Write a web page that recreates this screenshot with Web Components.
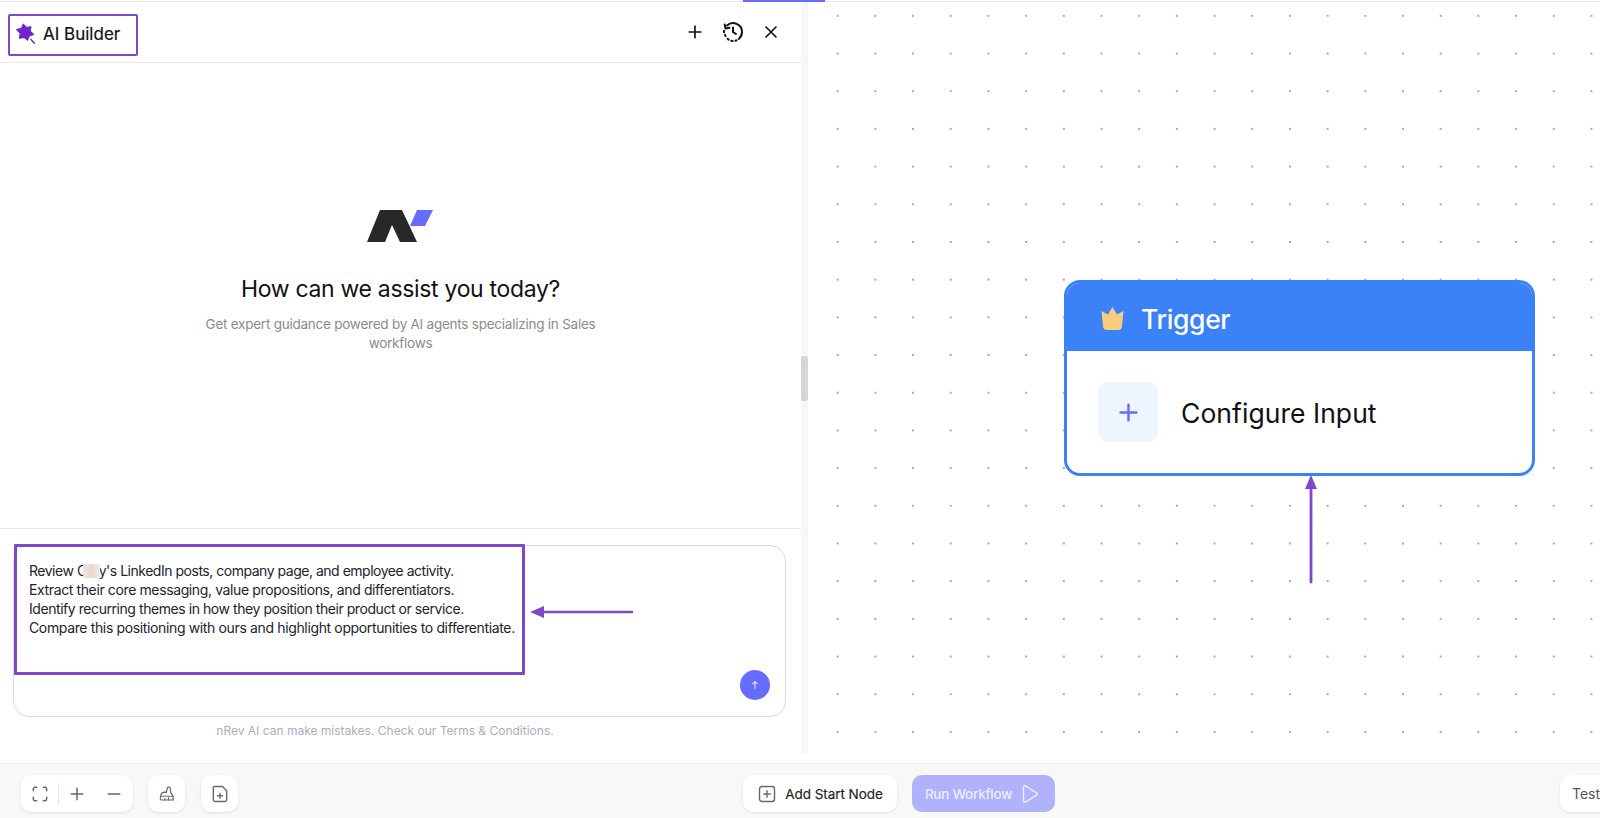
<!DOCTYPE html>
<html lang="en">
<head>
<meta charset="utf-8">
<title>AI Builder</title>
<style>
  html, body { margin: 0; height: 100%; overflow: hidden; background: #fff; }
  body { font-family: Inter, "Liberation Sans", sans-serif; }
</style>
</head>
<body>
<app-shell></app-shell>
<script>
const ICONS = {
  plus: `<path d="M12 5v14M5 12h14"/>`,
  close: `<path d="M6 6l12 12M18 6L6 18"/>`,
  history: `<path d="M6 5.400A9 9 0 0 1 21 12a9 9 0 0 1-3.200 6.900"/><path d="M15.500 20.300l-1 .4M11.600 21l-1.300-.2M7.600 19.600l-1-.8M4.600 16.200l-.6-1.300M3 12.200v-1.400"/><path d="M3.600 4.400l.9 4 4-.6"/><path d="M12 7.500V12l3 2"/>`,
  fit: `<path d="M4 8V6a2 2 0 0 1 2-2h2M16 4h2a2 2 0 0 1 2 2v2M20 16v2a2 2 0 0 1-2 2h-2M8 20H6a2 2 0 0 1-2-2v-2"/>`,
  minus: `<path d="M5 12h14"/>`,
  broom: `<path d="M4 13c.5-2 2.500-3.500 5-3.500l2 .5 1.500-6c.4-1.500 3.500-1.500 3.800 0l.7 6.500c2 1 3 3 3.500 9.500H5c-1.300 0-2-1-2-2z"/><path d="M3.500 15h17M9 20v-2M14 20v-3"/>`,
  doc: `<path d="M5 3h10l5 5v11a2 2 0 0 1-2 2H6a2 2 0 0 1-2-2V4a1 1 0 0 1 1-1z"/><path d="M12 11v6M9 14h6"/>`,
  addbox: `<rect x="3" y="3" width="18" height="18" rx="3"/><path d="M12 8v8M8 12h8"/>`,
  play: `<path d="M6 4.500c0-1.200 1.200-1.900 2.200-1.300l12 7.500c1 .6 1 2 0 2.600l-12 7.500c-1 .6-2.200-.1-2.200-1.300z"/>`
};

class UiIcon extends HTMLElement {
  connectedCallback() {
    const size = this.getAttribute("size") || 20;
    const sw = this.getAttribute("stroke") || 2;
    this.attachShadow({ mode: "open" }).innerHTML = `
      <style>:host { display: inline-flex; line-height: 0; } svg { display: block; }</style>
      <svg width="${size}" height="${size}" viewBox="0 0 24 24" fill="none" stroke="currentColor" stroke-width="${sw}" stroke-linecap="round" stroke-linejoin="round">${ICONS[this.getAttribute("name")]}</svg>`;
  }
}
customElements.define("ui-icon", UiIcon);

class AiHeader extends HTMLElement {
  constructor() {
    super();
    this.attachShadow({ mode: "open" }).innerHTML = `
      <style>
        :host { display: flex; align-items: center; justify-content: space-between; height: 61px; box-sizing: border-box; border-bottom: 1px solid #e8e8e8; padding: 0 20px 0 8px; flex: none; }
        .title { display: flex; align-items: center; gap: 6px; width: 130px; height: 42px; box-sizing: border-box; border: 2.5px solid #7e48c8; border-radius: 2px; padding: 0 0 2px 5px; font-size: 17px; font-weight: 400; color: #111; margin-top: 5px; -webkit-text-stroke: .2px #111; }
        .actions { display: flex; align-items: center; gap: 16px; color: #111; margin-top: 0; }
      </style>
      <div class="title">
        <svg width="22" height="22" viewBox="0 0 20 20"><path d="M7.500 1l2.700 3 4.300-.6-.6 4.200 3 2.800-3.900 1.500-1.700 3.700-3-2.500-4.300.7.800-4.300L1.500 6l4.300-1.100z" fill="#6d28c9" stroke="#6d28c9" stroke-linejoin="round"/><path d="M14.500 15l3.200 3.400" stroke="#6d28c9" stroke-width="1.400" stroke-linecap="round"/></svg>
        <span>AI Builder</span>
      </div>
      <div class="actions">
        <ui-icon name="plus" size="20"></ui-icon>
        <ui-icon name="history" size="24"></ui-icon>
        <ui-icon name="close" size="20"></ui-icon>
      </div>`;
  }
}
customElements.define("ai-header", AiHeader);

class AiWelcome extends HTMLElement {
  constructor() {
    super();
    this.attachShadow({ mode: "open" }).innerHTML = `
      <style>
        :host { display: flex; flex-direction: column; align-items: center; flex: 1; padding-top: 147px; box-sizing: border-box; }
        svg { display: block; margin-left: -2px; }
        h2 { margin: 31px 0 0; font-size: 23px; line-height: 32px; font-weight: 400; color: #111; letter-spacing: -.32px; }
        p { margin: 10px 0 0; width: 410px; text-align: center; font-size: 13.5px; line-height: 19px; color: #8b8b8b; letter-spacing: -.24px; }
      </style>
      <svg width="66" height="32" viewBox="0 0 66 32">
        <path d="M13 0h22l15 32H33l-8-17-7 17H0z" fill="#282828"/>
        <path d="M50 0h16l-8 16H43z" fill="#666cff"/>
      </svg>
      <h2>How can we assist you today?</h2>
      <p>Get expert guidance powered by AI agents specializing in Sales workflows</p>`;
  }
}
customElements.define("ai-welcome", AiWelcome);

class AiComposer extends HTMLElement {
  constructor() {
    super();
    this.attachShadow({ mode: "open" }).innerHTML = `
      <style>
        :host { display: block; flex: none; border-top: 1px solid #e8e8ec; padding: 16px 15px 0 13px; position: relative; }
        .box { height: 172px; box-sizing: border-box; border: 1px solid #d5dae5; border-radius: 16px; padding: 15px 15px; position: relative; color: #20242c; font-size: 14px; line-height: 19px; letter-spacing: -.38px; white-space: nowrap; }
        .box div:first-child { letter-spacing: -.48px; }
        .box div:nth-child(3) { letter-spacing: -.44px; }
        .box div:nth-child(4) { letter-spacing: -.36px; }
        .blur { display: inline-block; width: 17px; height: 14px; margin: 0 -1px 0 -4px; vertical-align: -2px; background: linear-gradient(90deg, #f0e6e0, #e7d8d0 50%, #f3ece8); position: relative; }
        .send { position: absolute; right: 15px; bottom: 16px; width: 30px; height: 30px; border-radius: 50%; background: #666cff; display: flex; align-items: center; justify-content: center; color: #d5d7ff; }
        .mark { position: absolute; left: 14px; top: 15px; width: 511px; height: 131px; box-sizing: border-box; border: 3px solid #7e48c8; border-radius: 1px; pointer-events: none; }
        .arrow { position: absolute; left: 528px; top: 75px; }
        .note { text-align: center; margin: 6px 0 0 -13px; width: 770px; font-size: 12px; line-height: 16px; color: #a9aebd; letter-spacing: 0; }
      </style>
      <div class="box">
        <div>Review C<span class="blur"></span>y's LinkedIn posts, company page, and employee activity.</div>
        <div>Extract their core messaging, value propositions, and differentiators.</div>
        <div>Identify recurring themes in how they position their product or service.</div>
        <div>Compare this positioning with ours and highlight opportunities to differentiate.</div>
        <span class="send"><svg width="10" height="10" viewBox="0 0 10 10" fill="none" stroke="currentColor" stroke-width="1.200"><path d="M5 9V1.500M2.500 4L5 1.500 7.500 4"/></svg></span>
      </div>
      <div class="mark"></div>
      <svg class="arrow" width="106" height="16" viewBox="0 0 106 16"><path d="M104 8H12" stroke="#7e48c8" stroke-width="2.500" stroke-linecap="round"/><path d="M2 8l14-6v12z" fill="#7e48c8"/></svg>
      <div class="note">nRev AI can make mistakes. Check our Terms &amp; Conditions.</div>`;
  }
}
customElements.define("ai-composer", AiComposer);

class AiPanel extends HTMLElement {
  constructor() {
    super();
    this.attachShadow({ mode: "open" }).innerHTML = `
      <style>
        :host { display: flex; flex-direction: column; width: 801px; flex: none; height: 100%; background: #fff; padding-bottom: 24px; box-sizing: border-box; }
      </style>
      <ai-header></ai-header>
      <ai-welcome></ai-welcome>
      <ai-composer></ai-composer>`;
  }
}
customElements.define("ai-panel", AiPanel);

class PanelDivider extends HTMLElement {
  constructor() {
    super();
    this.attachShadow({ mode: "open" }).innerHTML = `
      <style>
        :host { display: block; width: 7px; flex: none; background: #f5f7fd; position: relative; margin-bottom: 9px; }
        .thumb { position: absolute; left: 0; right: 0; top: 354px; height: 45px; background: #d5d6d8; border-radius: 2px; }
      </style>
      <div class="thumb"></div>`;
  }
}
customElements.define("panel-divider", PanelDivider);

class TriggerNode extends HTMLElement {
  constructor() {
    super();
    this.attachShadow({ mode: "open" }).innerHTML = `
      <style>
        :host { display: block; position: absolute; left: 256px; top: 278px; width: 471px; box-sizing: border-box; border: 3px solid #3b82f6; border-radius: 16px; background: #fff; overflow: hidden; }
        .head { height: 68px; box-sizing: border-box; background: #3b82f6; display: flex; align-items: center; gap: 17px; padding: 4px 0 0 34px; color: #fff; font-size: 26.5px; font-weight: 500; letter-spacing: -.35px; }
        .head svg { margin-top: -2px; }
        .body { height: 122px; display: flex; align-items: center; gap: 23px; padding-left: 31px; font-size: 26.5px; color: #111; letter-spacing: .05px; }
        .body span { margin-top: 2px; }
        .add { width: 60px; height: 60px; border-radius: 10px; background: #eff5ff; display: flex; align-items: center; justify-content: center; color: #666cff; }
      </style>
      <div class="head">
        <svg width="23" height="23" viewBox="0 0 23 23"><path d="M11.500 0l4.500 7.500 6.500-3.500-1.500 15a4 4 0 0 1-4 4H6a4 4 0 0 1-4-4L.5 4 7 7.500z" fill="#fbcb7e"/></svg>
        <span>Trigger</span>
      </div>
      <div class="body">
        <div class="add"><ui-icon name="plus" size="27" stroke="2.200"></ui-icon></div>
        <span>Configure Input</span>
      </div>`;
  }
}
customElements.define("trigger-node", TriggerNode);

class FlowCanvas extends HTMLElement {
  constructor() {
    super();
    this.attachShadow({ mode: "open" }).innerHTML = `
      <style>
        :host { display: block; flex: 1; position: relative; background-color: #fff; background-image: radial-gradient(circle, #a2aac0 .8px, transparent 1.1px); background-size: 37.7px 37.7px; background-position: 10.85px -5px; overflow: hidden; }
        .arrow { position: absolute; left: 495px; top: 471px; }
      </style>
      <trigger-node></trigger-node>
      <svg class="arrow" width="16" height="111" viewBox="0 0 16 111"><path d="M8 109V12" stroke="#7e48c8" stroke-width="2.800" stroke-linecap="round"/><path d="M8 2l6 14H2z" fill="#7e48c8"/></svg>`;
  }
}
customElements.define("flow-canvas", FlowCanvas);

class ToolBar extends HTMLElement {
  constructor() {
    super();
    this.attachShadow({ mode: "open" }).innerHTML = `
      <style>
        :host { display: flex; flex: none; height: 55px; box-sizing: border-box; border-top: 1px solid #ececea; background: #f8f8f7; padding: 11px 0 0 21px; align-items: flex-start; color: #6f6762; position: relative; }
        .card { height: 37px; background: #fff; border-radius: 10px; box-shadow: 0 1px 3px rgba(0,0,0,.1); display: flex; align-items: center; justify-content: center; box-sizing: border-box; }
        .zoom { width: 112px; gap: 0; justify-content: flex-start; }
        .zoom > * { width: 37px; display: flex; justify-content: center; }
        .sep { width: 1px !important; height: 22px; background: #e8e6e4; margin: 0 -1px 0 0; }
        .square { width: 37px; margin-left: 15px; }
        .square + .square { margin-left: 16px; }
        .add { width: 154px; margin-left: 505px; gap: 8px; color: #222; font-size: 13.5px; font-weight: 400; letter-spacing: -.05px; -webkit-text-stroke: .15px #222; }
        .add ui-icon { color: #6f6762; }
        .run { width: 143px; margin-left: 15px; background: #b0b2fb; color: #eceeff; gap: 6px; font-size: 13.5px; font-weight: 500; letter-spacing: -.25px; box-shadow: none; padding-right: 2px; }
        .test { position: absolute; left: 1560px; top: 11px; width: 50px; justify-content: flex-start; padding-left: 12px; font-size: 14px; color: #555; }
      </style>
      <div class="card zoom">
        <span><ui-icon name="fit" size="20" stroke="1.800"></ui-icon></span>
        <span class="sep"></span>
        <span><ui-icon name="plus" size="20" stroke="1.800"></ui-icon></span>
        <span><ui-icon name="minus" size="20" stroke="1.800"></ui-icon></span>
      </div>
      <div class="card square"><ui-icon name="broom" size="18" stroke="1.600"></ui-icon></div>
      <div class="card square"><ui-icon name="doc" size="20" stroke="1.700"></ui-icon></div>
      <div class="card add"><ui-icon name="addbox" size="20" stroke="1.700"></ui-icon><span>Add Start Node</span></div>
      <div class="card run"><span>Run Workflow</span><ui-icon name="play" size="22" stroke="1.500"></ui-icon></div>
      <div class="card test">Test</div>`;
  }
}
customElements.define("tool-bar", ToolBar);

class AppShell extends HTMLElement {
  constructor() {
    super();
    this.attachShadow({ mode: "open" }).innerHTML = `
      <style>
        :host { display: flex; flex-direction: column; height: 818px; width: 1600px; overflow: hidden; }
        .top { height: 2px; flex: none; box-sizing: border-box; border-top: 1px solid #fff; background: #e6e6e6; position: relative; }
        .top i { position: absolute; left: 743px; width: 82px; top: -1px; height: 2px; background: #666cff; }
        .main { flex: 1; display: flex; min-height: 0; }
      </style>
      <div class="top"><i></i></div>
      <div class="main">
        <ai-panel></ai-panel>
        <panel-divider></panel-divider>
        <flow-canvas></flow-canvas>
      </div>
      <tool-bar></tool-bar>`;
  }
}
customElements.define("app-shell", AppShell);
</script>
</body>
</html>
